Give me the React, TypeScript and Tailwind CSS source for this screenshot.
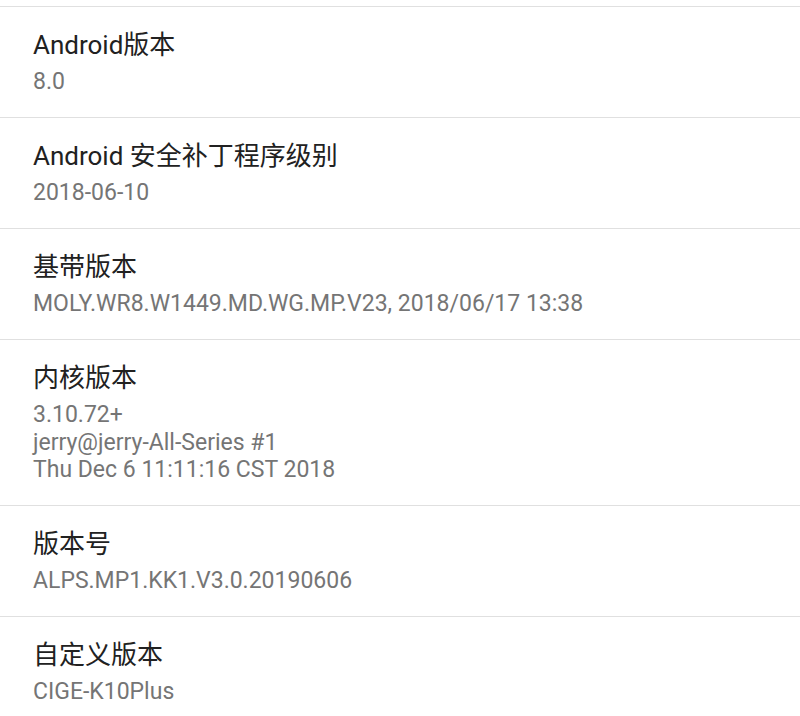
const rows: { title: string; lines: string[] }[] = [
  { title: 'Android版本', lines: ['8.0'] },
  { title: 'Android 安全补丁程序级别', lines: ['2018-06-10'] },
  { title: '基带版本', lines: ['MOLY.WR8.W1449.MD.WG.MP.V23, 2018/06/17 13:38'] },
  {
    title: '内核版本',
    lines: ['3.10.72+', 'jerry@jerry-All-Series #1', 'Thu Dec 6 11:11:16 CST 2018'],
  },
  { title: '版本号', lines: ['ALPS.MP1.KK1.V3.0.20190606'] },
  { title: '自定义版本', lines: ['CIGE-K10Plus'] },
]

export default function App() {
  return (
    <div className="w-[800px] h-[716px] overflow-hidden bg-white pt-[6px] font-['Roboto','Noto_Sans_CJK_SC',sans-serif]">
      {rows.map((row) => (
        <div key={row.title} className="border-t border-[#e0e0e0] px-[33px] pt-[21px] pb-[21.5px]">
          <div className="text-[26px] leading-[34px] text-[#212121]">{row.title}</div>
          <div className="mt-[6px] text-[23px] leading-[27.5px] text-[#757575]">
            {row.lines.map((line) => (
              <div key={line}>{line}</div>
            ))}
          </div>
        </div>
      ))}
    </div>
  )
}
